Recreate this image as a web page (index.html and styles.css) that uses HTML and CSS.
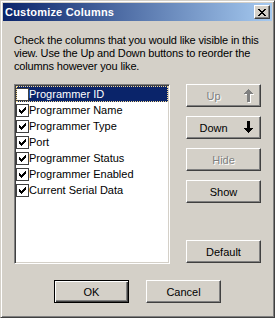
FILE: index.html
```html
<!DOCTYPE html>
<html>
<head>
<meta charset="utf-8">
<link rel="stylesheet" href="styles.css">
</head>
<body>
<div class="window">
  <div class="titlebar">
    <span class="title">Customize Columns</span>
    <button class="close" aria-label="Close">
      <svg width="8" height="7" viewBox="0 0 8 7" shape-rendering="crispEdges">
        <path d="M0 0h2v1h-2zM6 0h2v1h-2zM1 1h2v1h-2zM5 1h2v1h-2zM2 2h4v1h-4zM3 3h2v1h-2zM2 4h4v1h-4zM1 5h2v1h-2zM5 5h2v1h-2zM0 6h2v1h-2zM6 6h2v1h-2z" fill="#000"/>
      </svg>
    </button>
  </div>
  <div class="content">
    <p class="desc">Check the columns that you would like visible in this<br>view. Use the Up and Down buttons to reorder the<br>columns however you like.</p>
    <div class="main">
      <div class="list">
        <div class="item selected"><span class="cb"></span><span class="label">Programmer ID</span></div>
        <div class="item"><span class="cb checked"><svg width="7" height="7" viewBox="0 0 7 7" shape-rendering="crispEdges"><path d="M6 0h1v3h-1zM5 1h1v3h-1zM4 2h1v3h-1zM3 3h1v3h-1zM2 4h1v3h-1zM1 3h1v3h-1zM0 2h1v3h-1z" fill="#000"/></svg></span><span class="label">Programmer Name</span></div>
        <div class="item"><span class="cb checked"><svg width="7" height="7" viewBox="0 0 7 7" shape-rendering="crispEdges"><path d="M6 0h1v3h-1zM5 1h1v3h-1zM4 2h1v3h-1zM3 3h1v3h-1zM2 4h1v3h-1zM1 3h1v3h-1zM0 2h1v3h-1z" fill="#000"/></svg></span><span class="label">Programmer Type</span></div>
        <div class="item"><span class="cb checked"><svg width="7" height="7" viewBox="0 0 7 7" shape-rendering="crispEdges"><path d="M6 0h1v3h-1zM5 1h1v3h-1zM4 2h1v3h-1zM3 3h1v3h-1zM2 4h1v3h-1zM1 3h1v3h-1zM0 2h1v3h-1z" fill="#000"/></svg></span><span class="label">Port</span></div>
        <div class="item"><span class="cb checked"><svg width="7" height="7" viewBox="0 0 7 7" shape-rendering="crispEdges"><path d="M6 0h1v3h-1zM5 1h1v3h-1zM4 2h1v3h-1zM3 3h1v3h-1zM2 4h1v3h-1zM1 3h1v3h-1zM0 2h1v3h-1z" fill="#000"/></svg></span><span class="label">Programmer Status</span></div>
        <div class="item"><span class="cb checked"><svg width="7" height="7" viewBox="0 0 7 7" shape-rendering="crispEdges"><path d="M6 0h1v3h-1zM5 1h1v3h-1zM4 2h1v3h-1zM3 3h1v3h-1zM2 4h1v3h-1zM1 3h1v3h-1zM0 2h1v3h-1z" fill="#000"/></svg></span><span class="label">Programmer Enabled</span></div>
        <div class="item"><span class="cb checked"><svg width="7" height="7" viewBox="0 0 7 7" shape-rendering="crispEdges"><path d="M6 0h1v3h-1zM5 1h1v3h-1zM4 2h1v3h-1zM3 3h1v3h-1zM2 4h1v3h-1zM1 3h1v3h-1zM0 2h1v3h-1z" fill="#000"/></svg></span><span class="label">Current Serial Data</span></div>
      </div>
      <div class="side">
        <button class="btn arrow disabled"><span class="btn-text">Up</span>
          <svg class="arr" width="12" height="14" viewBox="0 0 12 14" shape-rendering="crispEdges">
            <path d="M6 1h1v7h-1z M5 2h3v1h-3zM4 3h5v1h-5zM3 4h7v1h-7zM2 5h9v1h-9zM5 6h3v8h-3z" fill="#fff"/>
            <path d="M5 0h1v7h-1z M4 1h3v1h-3zM3 2h5v1h-5zM2 3h7v1h-7zM1 4h9v1h-9zM4 5h3v8h-3z" fill="#808080"/>
          </svg>
        </button>
        <button class="btn arrow"><span class="btn-text">Down</span>
          <svg class="arr" width="12" height="14" viewBox="0 0 12 14" shape-rendering="crispEdges">
            <path d="M4 0h3v8h-3zM1 7h9v1h-9zM2 8h7v1h-7zM3 9h5v1h-5zM4 10h3v1h-3zM5 11h1v1h-1z" fill="#000"/>
          </svg>
        </button>
        <button class="btn disabled"><span class="btn-text">Hide</span></button>
        <button class="btn"><span class="btn-text">Show</span></button>
        <button class="btn default-gap"><span class="btn-text">Default</span></button>
      </div>
    </div>
    <div class="footer">
      <button class="btn primary"><span class="btn-text">OK</span></button>
      <button class="btn"><span class="btn-text">Cancel</span></button>
    </div>
  </div>
</div>
</body>
</html>
```

FILE: styles.css
```css
* { box-sizing: border-box; }
html, body { margin: 0; padding: 0; background: #d4d0c8; }
body { font-family: "Liberation Sans", Arial, sans-serif; font-size: 11px; color: #000; }

.window {
  width: 275px;
  height: 318px;
  background: #d4d0c8;
  border: 1px solid;
  border-color: #d4d0c8 #404040 #404040 #d4d0c8;
  box-shadow: inset 1px 1px #fff, inset -1px -1px #808080;
  padding: 2px;
  display: flex;
  flex-direction: column;
}

.titlebar {
  height: 18px;
  background: linear-gradient(to right, #0a246a, #a6caf0);
  display: flex;
  align-items: center;
  padding: 0 2px 0 2px;
}
.title {
  flex: 1;
  color: #fff;
  font-weight: bold;
  font-size: 11px;
  line-height: 18px;
  letter-spacing: 0.2px;
}
.close {
  width: 16px;
  height: 14px;
  padding: 0;
  margin: 0;
  background: #d4d0c8;
  border: 1px solid;
  border-color: #fff #404040 #404040 #fff;
  box-shadow: inset -1px -1px #808080;
  display: flex;
  align-items: center;
  justify-content: center;
}
.close svg { display: block; margin-left: -1px; }

.content {
  flex: 1;
  display: flex;
  flex-direction: column;
  padding: 0 11px;
}

.desc {
  margin: 13px 0 0 0;
  line-height: 13px;
  white-space: nowrap;
  letter-spacing: -0.15px;
}

.main {
  display: flex;
  gap: 16px;
  margin-top: 11px;
}

.list {
  width: 156px;
  height: 180px;
  background: #fff;
  border: 1px solid;
  border-color: #808080 #fff #fff #808080;
  box-shadow: inset 1px 1px #404040, inset -1px -1px #d4d0c8;
  padding: 1px;
}
.item {
  height: 16px;
  display: flex;
  align-items: center;
}
.item.selected {
  background: #0a246a;
  color: #fff;
  outline: 1px dotted #f5db95;
  outline-offset: -1px;
}
.cb {
  width: 13px;
  height: 13px;
  background: #fff;
  border: 1px solid #404040;
  flex: none;
  display: flex;
  align-items: center;
  justify-content: center;
}
.cb svg { display: block; }
.label { padding-left: 0; white-space: nowrap; }

.side {
  display: flex;
  flex-direction: column;
  gap: 9px;
}

.btn {
  width: 75px;
  height: 23px;
  background: #d4d0c8;
  border: 1px solid;
  border-color: #fff #404040 #404040 #fff;
  box-shadow: inset -1px -1px #808080;
  padding: 0;
  margin: 0;
  font-family: inherit;
  font-size: 11px;
  color: #000;
  display: flex;
  align-items: center;
  justify-content: center;
}
.btn.arrow { justify-content: flex-start; }
.btn.arrow .btn-text { width: 53px; text-align: center; }
.btn.arrow .arr { margin-left: 3px; }
.btn.disabled { color: #808080; text-shadow: 1px 1px #fff; }
.btn.default-gap { margin-top: 28px; }

.footer {
  display: flex;
  justify-content: center;
  gap: 17px;
  margin-top: 16px;
}
.btn.primary {
  border: 1px solid #000;
  box-shadow: inset 1px 1px #fff, inset -1px -1px #404040, inset -2px -2px #808080;
}
```
